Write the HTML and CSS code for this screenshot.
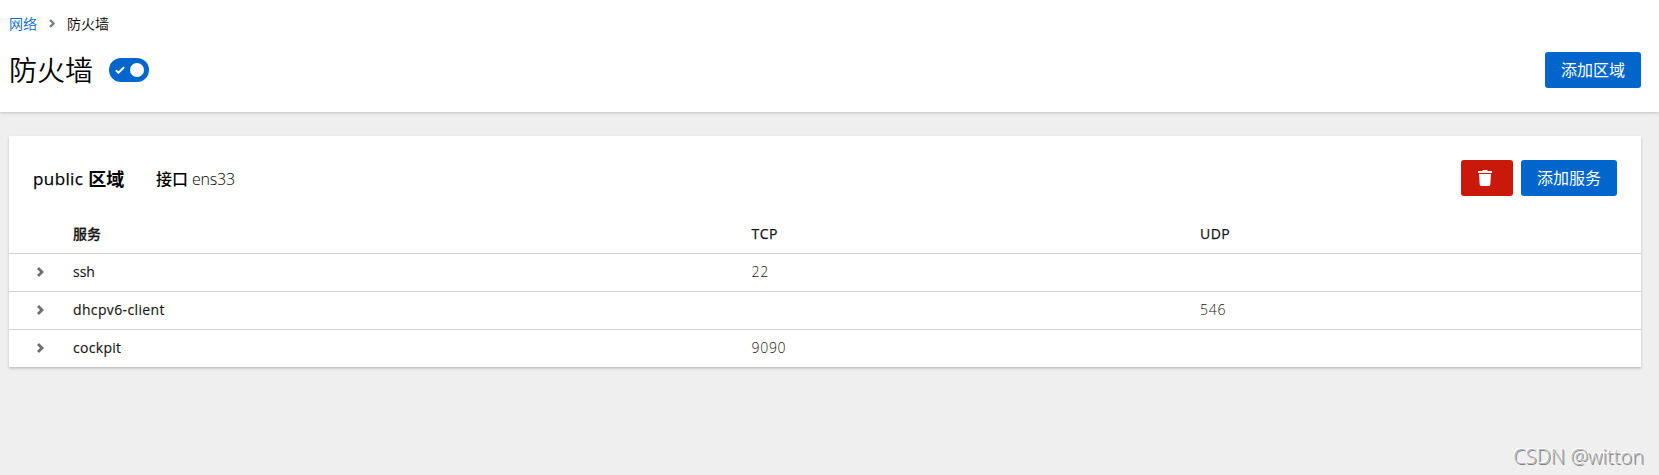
FILE: index.html
```html
<!DOCTYPE html>
<html lang="zh-CN">
<head>
<meta charset="utf-8">
<title>防火墙</title>
<link rel="stylesheet" href="styles.css">
</head>
<body>
<header class="page-header">
  <nav class="breadcrumb">
    <a class="crumb-link">网络</a>
    <svg class="crumb-chevron" viewBox="0 0 6 9"><path d="M1 1 4.5 4.5 1 8"/></svg>
    <span>防火墙</span>
  </nav>
  <div class="title-row">
    <h1 class="title">防火墙</h1>
    <span class="switch">
      <svg class="switch-check" viewBox="0 0 10 8"><path d="M.9 4.2 3.5 6.7 9.1 1.1"/></svg>
      <span class="switch-knob"></span>
    </span>
    <button class="btn push">添加区域</button>
  </div>
</header>
<main class="card">
  <div class="card-header">
    <h2 class="zone"><span class="w-public">public</span><b>区域</b></h2>
    <div class="iface"><b>接口</b><span class="w-ens">ens33</span></div>
    <button class="btn danger push" aria-label="删除">
      <svg class="trash" viewBox="0 0 14 16"><path d="M0 1h4.2L5 0h4l.8 1H14v2H0zM1 4h12l-.7 10.6A1.5 1.5 0 0 1 10.8 16H3.2a1.5 1.5 0 0 1-1.5-1.4z"/></svg>
    </button>
    <button class="btn">添加服务</button>
  </div>
  <div class="row head"><span></span><b class="cjk">服务</b><b>TCP</b><b>UDP</b></div>
  <div class="row"><svg class="chevron" viewBox="0 0 7 10"><path d="M1 1 5 5 1 9"/></svg><span class="name">ssh</span><span class="port">22</span><span></span></div>
  <div class="row"><svg class="chevron" viewBox="0 0 7 10"><path d="M1 1 5 5 1 9"/></svg><span class="name w-dhcp">dhcpv6-client</span><span></span><span class="port">546</span></div>
  <div class="row"><svg class="chevron" viewBox="0 0 7 10"><path d="M1 1 5 5 1 9"/></svg><span class="name w-cockpit">cockpit</span><span class="port">9090</span><span></span></div>
</main>
<div class="watermark">CSDN @witton</div>
</body>
</html>
```
FILE: styles.css
```css
* { box-sizing: border-box; }
body {
  margin: 0;
  height: 475px;
  overflow: hidden;
  background: #efefef;
  color: #151515;
  font: 14px/20px "Open Sans", "Noto Sans CJK SC", sans-serif;
}
.page-header {
  height: 112px;
  padding: 13px 18px 0 9px;
  background: #fff;
  color: #000;
  box-shadow: 0 1px 2px rgba(3, 3, 3, .12), 0 2px 5px rgba(3, 3, 3, .06);
}
.breadcrumb { display: flex; align-items: center; height: 21px; font-weight: 350; }
.crumb-link { color: #06c; }
.crumb-chevron { width: 6px; height: 9px; margin: 0 12px; }
.crumb-chevron path { fill: none; stroke: #7a7e83; stroke-width: 2.4; }
.chevron path { fill: none; stroke: #6a6e73; stroke-width: 2.8; }
.title-row { display: flex; align-items: center; height: 36px; margin-top: 18px; }
.title { margin: 0; font-size: 28px; font-weight: 350; line-height: 36px; }
.switch {
  display: flex;
  align-items: center;
  justify-content: space-between;
  width: 40px;
  height: 24px;
  margin-left: 16px;
  padding: 0 5px 0 6px;
  border-radius: 12px;
  background: #06c;
}
.switch-check { width: 10px; height: 8px; }
.switch-check path { fill: none; stroke: #fff; stroke-width: 2; }
.switch-knob { width: 14px; height: 14px; border-radius: 50%; background: #fff; }
.btn {
  display: flex;
  align-items: center;
  justify-content: center;
  width: 96px;
  height: 36px;
  padding: 0 0 2px;
  border: 0;
  border-radius: 3px;
  background: #06c;
  color: #fff;
  font: 400 16px/24px "Noto Sans CJK SC", sans-serif;
}
.push { margin-left: auto; }
.danger { width: 52px; margin-right: 8px; padding: 0 4px 1px 0; background: #c9190b; }
.trash { width: 14px; height: 16px; fill: #fff; }
.card {
  height: 231px;
  margin: 24px 18px 0 9px;
  background: #fff;
  box-shadow: 0 1px 2px rgba(3, 3, 3, .12), 0 2px 3px rgba(3, 3, 3, .1);
}
.card-header { display: flex; align-items: center; height: 84px; padding: 0 24px; color: #000; }
.zone { display: flex; gap: 5px; margin: 0; width: 123px; padding-top: 2px; font-size: 18px; line-height: 26px; font-weight: 500; }
.zone b { font-weight: 700; }
.iface { display: flex; gap: 4px; padding-top: 2px; font-size: 16px; line-height: 24px; }
.iface b { font-weight: 500; }
.w-ens { font-weight: 300; letter-spacing: -.2px; }
.w-public { font-size: 17px; letter-spacing: .4px; -webkit-text-stroke: .25px; }
.row {
  display: grid;
  grid-template-columns: 64px 678.5px 448.5px 1fr;
  align-items: center;
  height: 38px;
  padding-bottom: 1px;
  border-top: 1px solid #d2d2d2;
}
.head { height: 33px; border-top: 0; padding-bottom: 5px; }
.head b { font-weight: 500; letter-spacing: .5px; -webkit-text-stroke: .25px; }
.head .cjk { letter-spacing: 0; }
.chevron { width: 7px; height: 10px; margin-left: 28px; }
.name { font-weight: 500; -webkit-text-stroke: .15px; }
.w-dhcp { letter-spacing: .36px; }
.w-cockpit { letter-spacing: .3px; }
.port { font-weight: 300; letter-spacing: .7px; }
.watermark {
  position: absolute;
  right: 15px;
  bottom: 6px;
  color: #b4b4b4;
  font: 300 20px/24px "Open Sans", sans-serif;
  text-shadow: -1px -1px 0 #fff, 1px 1px 0 #808080;
}
```
